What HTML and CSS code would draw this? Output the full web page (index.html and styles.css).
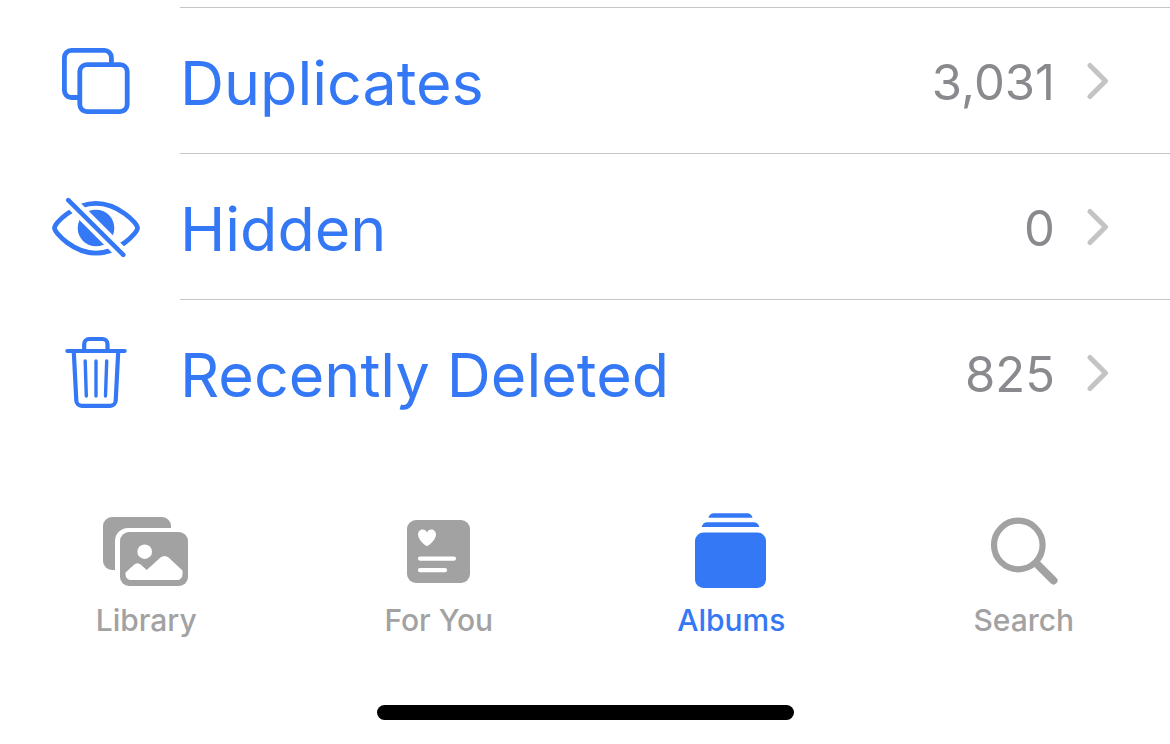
FILE: index.html
```html
<!DOCTYPE html>
<html lang="en">
<head>
<meta charset="utf-8">
<meta name="viewport" content="width=device-width, initial-scale=1">
<title>Albums</title>
<link rel="stylesheet" href="styles.css">
</head>
<body>
<main>
  <ul class="list">
    <li>
      <a class="row" href="#duplicates">
        <svg class="row-icon" viewBox="52 40 88 81" aria-hidden="true" fill="none" stroke="currentColor" stroke-width="4.8">
          <path d="M79 97.5H71.4a7 7 0 0 1-7-7V57.4a7 7 0 0 1 7-7h33a7 7 0 0 1 7 7V64"/>
          <rect x="79.8" y="64.6" width="47.4" height="47" rx="7"/>
        </svg>
        <span class="row-body">
          <span class="name">Duplicates</span>
          <span class="count">3,031</span>
          <svg class="chevron" viewBox="0 0 22 38" aria-hidden="true"><path d="M3 3.500L18.500 19L3 34.500"/></svg>
        </span>
      </a>
    </li>
    <li>
      <a class="row" href="#hidden">
        <svg class="row-icon" viewBox="52 186 88 81" aria-hidden="true" fill="none" stroke="currentColor">
          <path stroke-width="4.800" d="M54.500 228C54.500 223 74 203.400 96 203.400S137.500 223 137.500 228S118 253.200 96 253.200S54.500 233 54.500 228Z"/>
          <circle cx="96" cy="228" r="18.300" fill="currentColor" stroke="none"/>
          <path stroke="#fff" stroke-width="13" d="M66 197.500L125.500 257"/>
          <path stroke-width="4.600" stroke-linecap="round" d="M68.300 200.200L123.300 254.800"/>
        </svg>
        <span class="row-body">
          <span class="name">Hidden</span>
          <span class="count">0</span>
          <svg class="chevron" viewBox="0 0 22 38" aria-hidden="true"><path d="M3 3.500L18.500 19L3 34.500"/></svg>
        </span>
      </a>
    </li>
    <li>
      <a class="row" href="#deleted">
        <svg class="row-icon" viewBox="52 332 88 81" aria-hidden="true" fill="none" stroke="currentColor" stroke-width="4.200" stroke-linecap="round" stroke-linejoin="round">
          <path d="M67.300 351H124.700"/>
          <path d="M84.200 350V344a5 5 0 0 1 5-5h13.300a5 5 0 0 1 5 5v6"/>
          <path d="M73.800 352L76.300 400.500a5.500 5.500 0 0 0 5.500 5.300H110.200a5.500 5.500 0 0 0 5.500-5.300L118.200 352"/>
          <path stroke-width="3.400" d="M85.200 361L86.300 396M96 361V396M106.700 361L105.500 396"/>
        </svg>
        <span class="row-body">
          <span class="name">Recently Deleted</span>
          <span class="count">825</span>
          <svg class="chevron" viewBox="0 0 22 38" aria-hidden="true"><path d="M3 3.500L18.500 19L3 34.500"/></svg>
        </span>
      </a>
    </li>
  </ul>
</main>
<nav class="tabs" aria-label="Sections">
  <a class="tab" href="#library">
    <svg class="tab-icon" viewBox="101 508 90 84" aria-hidden="true">
      <path fill="currentColor" d="M112 517H162a9 9 0 0 1 9 9v2H128a13 13 0 0 0-13 13v29h-3a9 9 0 0 1-9-9V526a9 9 0 0 1 9-9z"/>
      <rect fill="currentColor" x="120" y="532" width="68" height="54" rx="9"/>
      <circle fill="#fff" cx="144.700" cy="551.700" r="7.300"/>
      <path fill="#fff" d="M125.500 572.500L134 564.800Q137.500 561.800 141 564.800L146.700 570L160.500 557.500Q164.500 554.400 168.500 557.500L182.500 570.500V574.500a5.500 5.500 0 0 1-5.500 5.500H131a5.500 5.500 0 0 1-5.500-5.500z"/>
    </svg>
    <span>Library</span>
  </a>
  <a class="tab" href="#for-you">
    <svg class="tab-icon" viewBox="394 508 90 84" aria-hidden="true">
      <rect fill="currentColor" x="407" y="520" width="63" height="63" rx="9"/>
      <path fill="#fff" d="M427 546C425.500 546 418 540 418 534.500C418 531.500 420 529.500 422.500 529.500C424.700 529.500 426.200 530.800 427 532.500C427.800 530.800 429.300 529.500 431.500 529.500C434 529.500 436 531.500 436 534.500C436 540 428.500 546 427 546Z"/>
      <path stroke="#fff" stroke-width="4.200" stroke-linecap="round" d="M420 558.600H454M420 570.200H445"/>
    </svg>
    <span>For You</span>
  </a>
  <a class="tab active" href="#albums" aria-current="page">
    <svg class="tab-icon" viewBox="686 508 90 84" aria-hidden="true" fill="currentColor">
      <path d="M708.500 517.800Q709.500 513.300 714 513.300H747Q751.500 513.300 752.500 517.800Z"/>
      <path d="M701.700 527Q702.700 522.200 707.500 522.200H753.500Q758.300 522.200 759.300 527Z"/>
      <rect x="695" y="532.600" width="71" height="55.400" rx="8.500"/>
    </svg>
    <span>Albums</span>
  </a>
  <a class="tab" href="#search">
    <svg class="tab-icon" viewBox="979 508 90 84" aria-hidden="true" fill="none" stroke="currentColor">
      <circle cx="1018.300" cy="545" r="24.300" stroke-width="6.200"/>
      <path stroke-width="8" stroke-linecap="round" d="M1036.500 563.500L1053.500 580.500"/>
    </svg>
    <span>Search</span>
  </a>
</nav>
<div class="home-indicator"></div>
</body>
</html>
```

FILE: styles.css
```css
* {
  box-sizing: border-box;
}

body {
  margin: 0;
  padding-top: 7px;
  background: #fff;
  font-family: Inter, "Liberation Sans", sans-serif;
}

a {
  color: inherit;
  text-decoration: none;
}

.list {
  margin: 0;
  padding: 0;
  list-style: none;
}

.row {
  display: flex;
  align-items: center;
  gap: 40px;
  padding-left: 52px;
  color: #3478f6;
}

.row-icon {
  flex: none;
  width: 88px;
  height: 81px;
}

.row-body {
  flex: 1;
  display: flex;
  align-items: center;
  min-height: 146px;
  padding-right: 61px;
  border-top: 1px solid #c6c6c8;
}

.name {
  flex: 1;
  padding-top: 4px;
  font-size: 61px;
  line-height: 80px;
}

.count {
  margin-right: 32px;
  padding-top: 4px;
  color: #8a8a8e;
  font-size: 49px;
  line-height: 64px;
}

.chevron {
  flex: none;
  width: 22px;
  height: 38px;
  fill: none;
  stroke: #c4c4c6;
  stroke-width: 5;
  stroke-linecap: round;
  stroke-linejoin: round;
}

.tabs {
  display: flex;
  padding-top: 63px;
}

.tab {
  flex: 1;
  display: flex;
  flex-direction: column;
  align-items: center;
  gap: 10px;
  color: #a2a2a2;
  font-size: 30px;
  font-weight: 500;
  line-height: 36px;
}

.tab.active {
  color: #3478f6;
}

.tab-icon {
  width: 90px;
  height: 84px;
}

.home-indicator {
  width: 417px;
  max-width: 80%;
  height: 15px;
  margin: 67px auto 24px;
  border-radius: 8px;
  background: #000;
}
```
